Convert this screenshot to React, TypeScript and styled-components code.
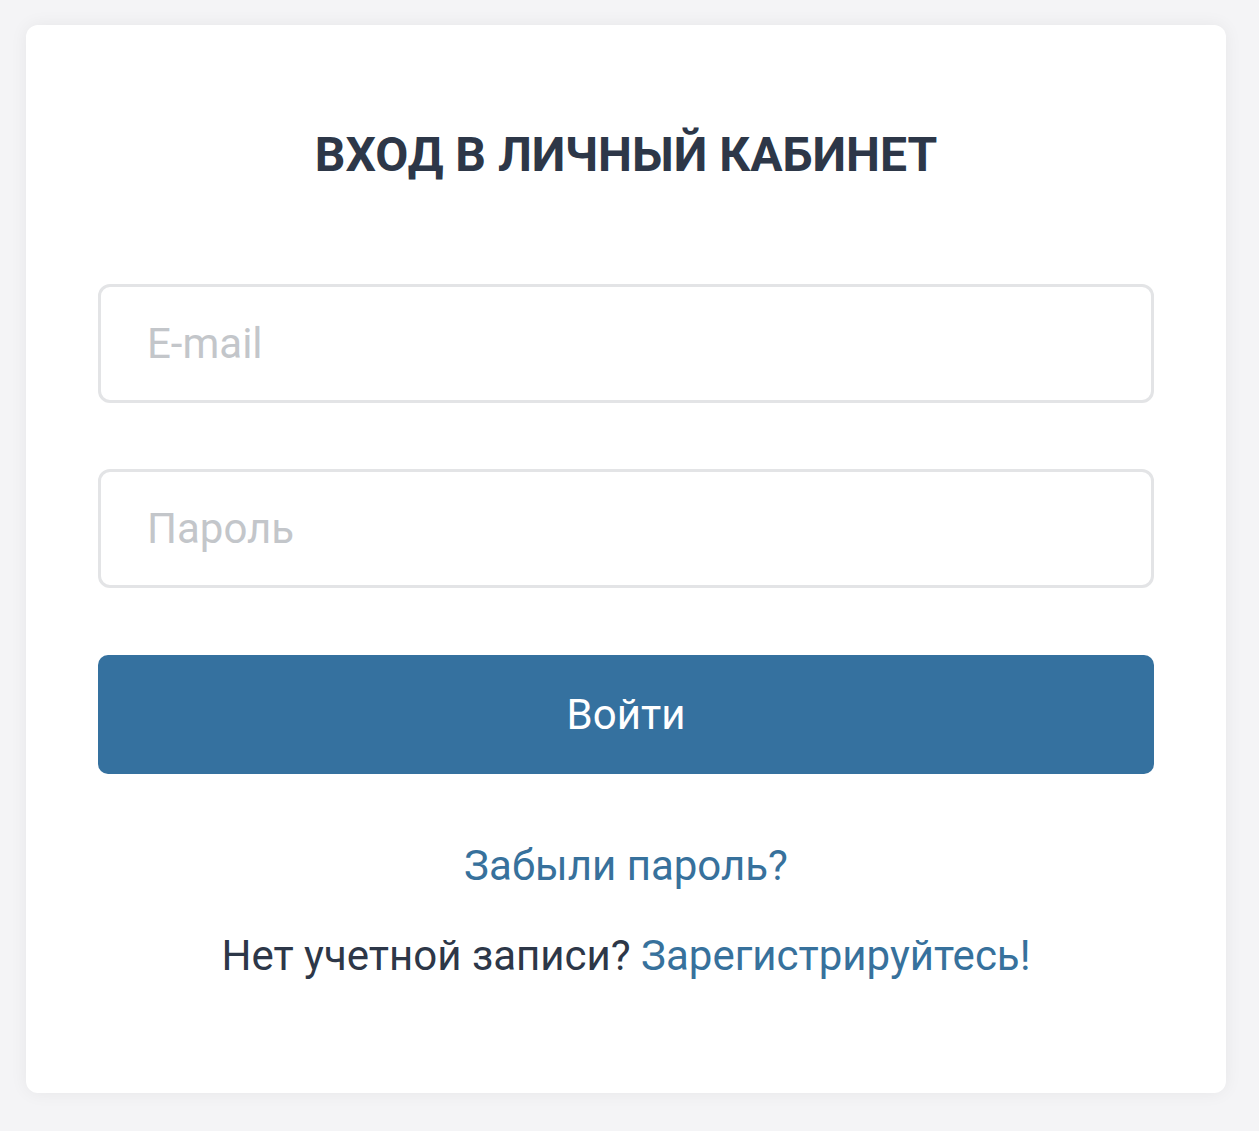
import styled, { createGlobalStyle } from "styled-components";

const GlobalStyle = createGlobalStyle`
  html, body {
    margin: 0;
    padding: 0;
    background: #f4f4f6;
    font-family: Roboto, "Liberation Sans", Arial, sans-serif;
  }
  * {
    box-sizing: border-box;
  }
`;

const Page = styled.div`
  padding: 25px 33px 38px 26px;
`;

const Card = styled.div`
  width: 1200px;
  min-height: 1068px;
  background: #ffffff;
  border-radius: 12px;
  box-shadow: 0 0 18px rgba(0, 0, 0, 0.06);
  padding: 101px 72px 112px;
  display: flex;
  flex-direction: column;
  align-items: stretch;
`;

const Title = styled.h1`
  margin: 0 0 100px;
  text-align: center;
  font-size: 48px;
  line-height: 58px;
  font-weight: 700;
  color: #2d3748;
`;

const Field = styled.input<{ $gap?: number }>`
  display: block;
  width: 100%;
  height: 119px;
  margin-bottom: ${(p) => p.$gap ?? 0}px;
  padding: 0 46px;
  border: 3px solid #e3e4e6;
  border-radius: 12px;
  font-family: inherit;
  font-size: 42px;
  color: #2d3748;
  background: #ffffff;
  outline: none;

  &::placeholder {
    color: #c3c6ca;
  }
`;

const SubmitButton = styled.button`
  width: 100%;
  height: 119px;
  border: none;
  border-radius: 10px;
  background: #35719f;
  color: #ffffff;
  font-family: inherit;
  font-size: 42px;
  cursor: pointer;
`;

const LinkRow = styled.p<{ $top: number }>`
  margin: ${(p) => p.$top}px 0 0;
  text-align: center;
  font-size: 42px;
  line-height: 50px;
  color: #2d3748;
`;

const Link = styled.a`
  color: #37719c;
  text-decoration: none;
  cursor: pointer;
`;

export default function App() {
  return (
    <>
      <GlobalStyle />
      <Page>
        <Card>
          <Title>ВХОД В ЛИЧНЫЙ КАБИНЕТ</Title>
          <Field type="email" placeholder="E-mail" $gap={66} />
          <Field type="password" placeholder="Пароль" $gap={67} />
          <SubmitButton>Войти</SubmitButton>
          <LinkRow $top={67}>
            <Link>Забыли пароль?</Link>
          </LinkRow>
          <LinkRow $top={40}>
            Нет учетной записи? <Link>Зарегистрируйтесь!</Link>
          </LinkRow>
        </Card>
      </Page>
    </>
  );
}
